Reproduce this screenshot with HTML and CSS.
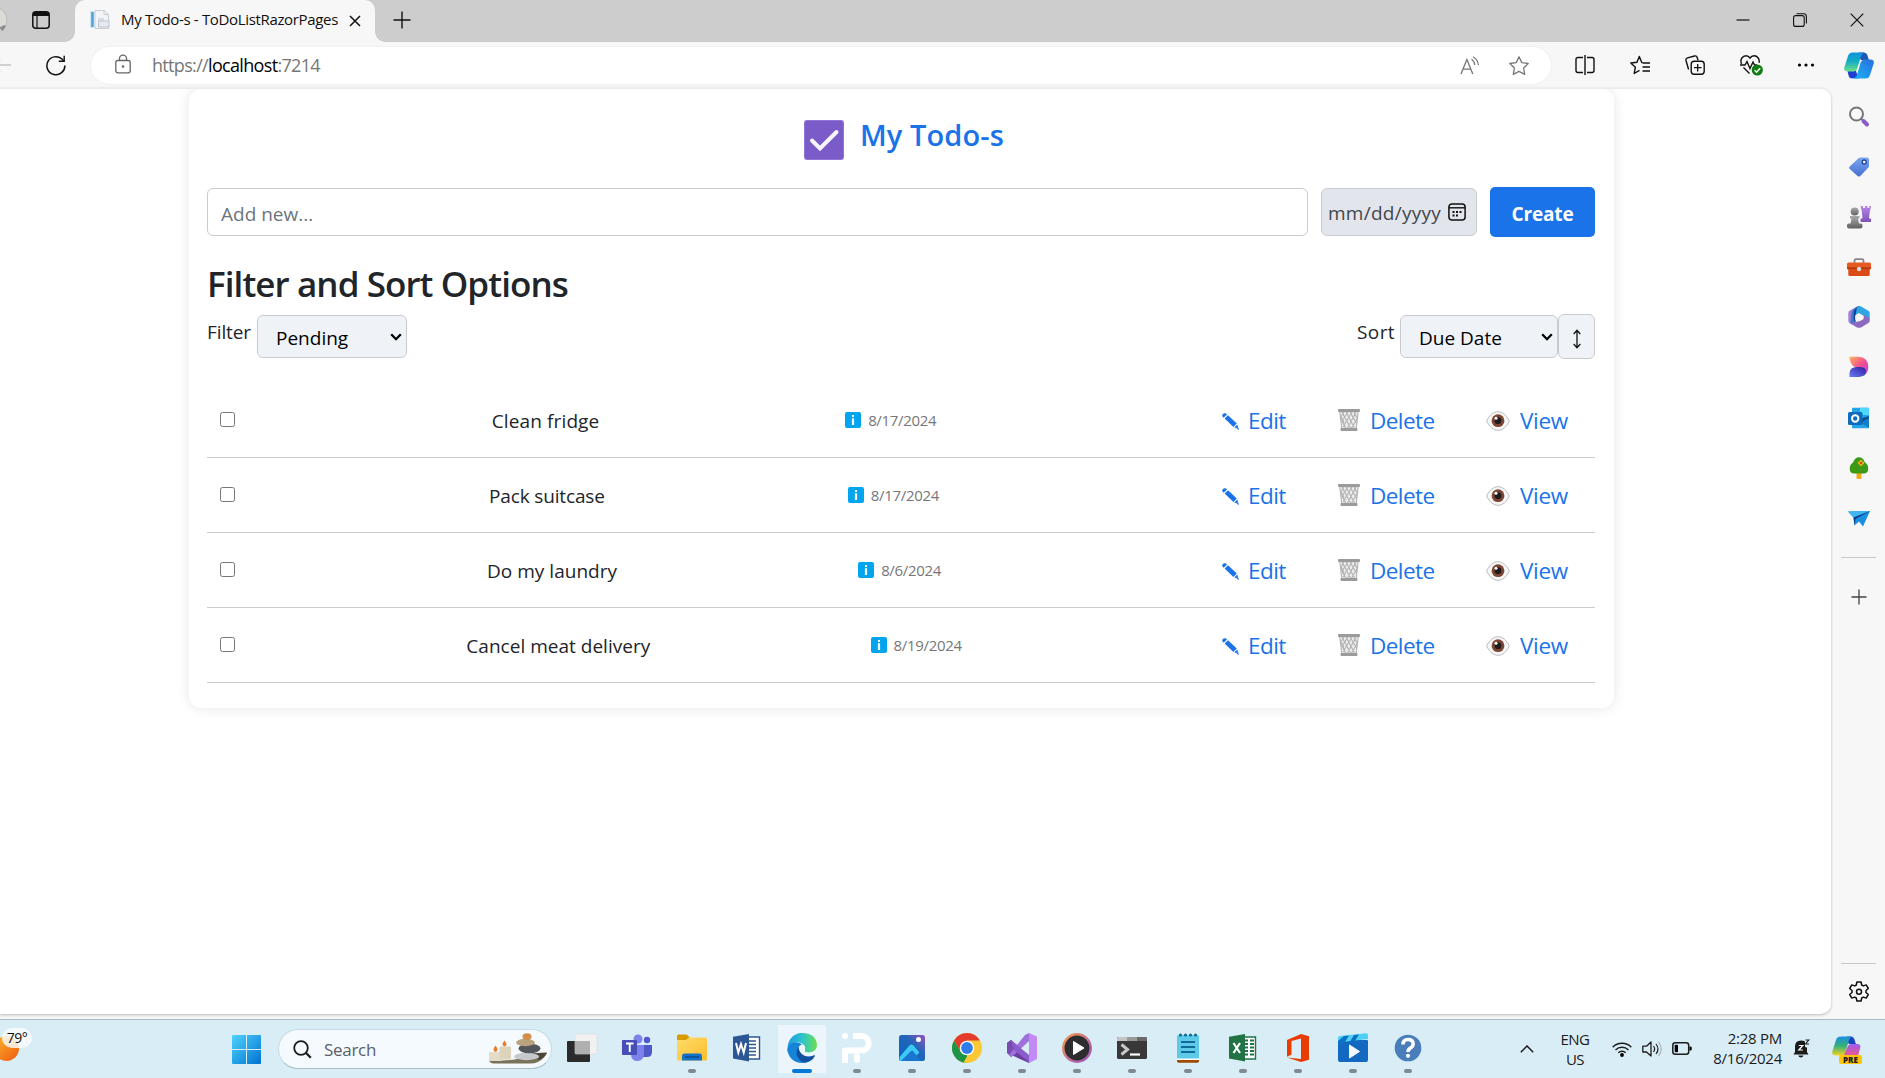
FILE: index.html
```html
<!DOCTYPE html>
<html lang="en">
<head>
<meta charset="utf-8">
<title>My Todo-s - ToDoListRazorPages</title>
<link rel="stylesheet" href="styles.css">
</head>
<body>
<svg class="defs" aria-hidden="true">
  <defs>
    <linearGradient id="g-blue" x1="0" y1="0" x2="1" y2="1"><stop offset="0" stop-color="#4fd3fb"/><stop offset="1" stop-color="#0072d2"/></linearGradient>
    <linearGradient id="g-purple" x1="0" y1="0" x2="0" y2="1"><stop offset="0" stop-color="#b987e6"/><stop offset="1" stop-color="#7c52ba"/></linearGradient>
    <linearGradient id="g-gray" x1="0" y1="0" x2="0" y2="1"><stop offset="0" stop-color="#aaa"/><stop offset="1" stop-color="#616161"/></linearGradient>
    <linearGradient id="g-tag" x1="0" y1="0" x2="0" y2="1"><stop offset="0" stop-color="#7ba8f0"/><stop offset="1" stop-color="#446fd0"/></linearGradient>
    <linearGradient id="g-cop1" x1="0" y1="0" x2="0" y2="1"><stop offset="0" stop-color="#0f94dc"/><stop offset=".45" stop-color="#12acc4"/><stop offset="1" stop-color="#6ee08a"/></linearGradient>
    <linearGradient id="g-cop2" x1="0" y1="1" x2="1" y2="0"><stop offset="0" stop-color="#19b4fa"/><stop offset="1" stop-color="#2a6edb"/></linearGradient>
    <linearGradient id="g-pre1" x1="0" y1="0" x2="0" y2="1"><stop offset="0" stop-color="#1b8fe0"/><stop offset=".5" stop-color="#35b07a"/><stop offset="1" stop-color="#f6d51f"/></linearGradient>
    <linearGradient id="g-pre2" x1="0" y1="0" x2="0" y2="1"><stop offset="0" stop-color="#9a5cf0"/><stop offset="1" stop-color="#f0578a"/></linearGradient>
    <linearGradient id="g-sun" x1="0" y1="0" x2="1" y2="1"><stop offset="0" stop-color="#ffb52e"/><stop offset="1" stop-color="#ee5a10"/></linearGradient>
    <linearGradient id="g-folder" x1="0" y1="0" x2="1" y2="1"><stop offset="0" stop-color="#ffdc6b"/><stop offset="1" stop-color="#fbbd2c"/></linearGradient>
    <linearGradient id="g-edge1" x1="0" y1="0" x2="1" y2="0"><stop offset="0" stop-color="#1f9be0"/><stop offset=".5" stop-color="#2cc3cf"/><stop offset="1" stop-color="#6be04e"/></linearGradient>
    <linearGradient id="g-photo" x1="0" y1="1" x2="1" y2="0"><stop offset="0" stop-color="#0b63c0"/><stop offset=".6" stop-color="#2166ba"/><stop offset="1" stop-color="#9a50b8"/></linearGradient>
    <linearGradient id="g-ring" x1="0" y1="0" x2="1" y2="1"><stop offset="0" stop-color="#f59a4a"/><stop offset="1" stop-color="#9a50c8"/></linearGradient>
    <linearGradient id="g-design" x1="0" y1="0" x2="1" y2="1"><stop offset="0" stop-color="#ffb35a"/><stop offset=".5" stop-color="#f4518f"/><stop offset="1" stop-color="#b43af0"/></linearGradient>
    <linearGradient id="g-design2" x1="0" y1="1" x2="1" y2="0"><stop offset="0" stop-color="#6d7cf8"/><stop offset="1" stop-color="#2c1f9c"/></linearGradient>

    <symbol id="i-pencil" viewBox="0 0 17 17"><path fill="#1a73e8" d="M2.600 5.600 6 2.200 14.800 10.600 11.400 14z"/><path fill="#1a73e8" d="M.5 3.600C0 2.500.2 1.600.9.900S2.900-.1 4 .5L5 1.400 1.700 4.700zM12.300 14.500 15.300 11.500 16 14 15 15.200zM14.600 15.700 16.200 14.200 17 17z"/></symbol>
    <symbol id="i-bin" viewBox="0 0 22 23">
      <path fill="#c9c9c9" fill-opacity=".35" d="M1.500 3h19l-2.300 17H3.800z"/>
      <path fill="none" stroke="#b3b3b3" stroke-width="1.100" d="M1.800 3l2 17M20.200 3l-2 17M6 3l-3 5 5 12M10 3 4 12l4 8M14 3 5 18M18 3 9 20M20 8l-7 12M16 3l3 6M12 3l7 12M8 3l9 17M4 3l9 17M3 8l3 5"/>
      <rect y="0" width="22" height="3" rx="1" fill="#9b9b9b"/><rect x="2.500" y="19" width="17" height="3" rx="1" fill="#9b9b9b"/></symbol>
    <symbol id="i-eye" viewBox="0 0 24 20"><path d="M.6 10C3.500 4 7.500.7 12 .7S20.500 4 23.400 10C20.500 16 16.500 19.300 12 19.300S3.500 16 .6 10z" fill="#f6f6f6" stroke="#b5b5b5" stroke-width=".9"/><circle cx="12" cy="9.700" r="6.400" fill="#7d4533"/><circle cx="12" cy="9.700" r="3.400" fill="#1c1c1c"/><circle cx="10" cy="7.300" r="1.500" fill="#fff"/></symbol>
    <symbol id="i-info" viewBox="0 0 16 16"><rect width="16" height="16" rx="2" fill="#00a4ef"/><path fill="#fff" d="M7 3h2v2H7zM6.900 6.200h2.200V13H6.900z"/></symbol>
    <symbol id="i-chev" viewBox="0 0 12 8"><path d="M1.200 1.300 6 6.200l4.800-4.900" fill="none" stroke="#000" stroke-width="2.300"/></symbol>
    <symbol id="i-star" viewBox="0 0 20 20"><path d="M10 .8l2.800 5.800 6.400.9-4.600 4.500 1.100 6.400-5.700-3-5.700 3 1.100-6.400L.8 7.500l6.400-.9z" fill="none" stroke-width="1.300" stroke-linejoin="round"/></symbol>
  </defs>
</svg>

<div class="screen">
  <header class="tabstrip">
    <div class="strip-left">
      <svg class="avatar" viewBox="0 0 8 28"><circle cx="-6" cy="14" r="13" fill="#dcdbd7" stroke="#bbb"/><path d="M-1 22q5-4 7-2l-3 5z" fill="#8d8d8d"/></svg>
      <svg class="tab-actions" viewBox="0 0 18 18"><rect x=".8" y=".8" width="16.400" height="16.400" rx="3" fill="none" stroke="#111" stroke-width="1.500"/><path d="M1 5V3q0-2 2-2h12q2 0 2 2v2z" fill="#111"/><path d="M5 5v12" stroke="#111" stroke-width="1.200"/></svg>
    </div>
    <div class="tab">
      <svg class="favicon" viewBox="0 0 20 20"><path d="M5 .5h9l4.500 4v14H5z" fill="#f3f4f6" stroke="#c9cdd3"/><path d="M14 .5v4h4.500" fill="none" stroke="#c9cdd3"/><path d="M0 1h4.500v17H0z" fill="#cfe5f3"/><path d="M1.200 2h2.500v15H1.200z" fill="#4fa3d1"/><path d="M8 8h6v4H8z" fill="#d9dde5"/><rect x="8.500" y="11" width="10.500" height="6" fill="#e6e9ef" stroke="#bcc3d0"/></svg>
      <span class="tab-title">My Todo-s - ToDoListRazorPages</span>
      <svg class="tab-close" viewBox="0 0 12 12"><path d="M1 1l10 10M11 1 1 11" stroke="#111" stroke-width="1.500"/></svg>
    </div>
    <svg class="new-tab" viewBox="0 0 18 18"><path d="M9 .5v17M.5 9h17" stroke="#111" stroke-width="1.400"/></svg>
    <div class="window-buttons">
      <svg viewBox="0 0 14 14"><path d="M.5 7h13" stroke="#111" stroke-width="1.200"/></svg>
      <svg viewBox="0 0 14 14"><rect x=".6" y="2.600" width="10.600" height="10.800" rx="2" fill="none" stroke="#111" stroke-width="1.100"/><path d="M3.500 .7h7q2.900 0 2.900 2.900v7" fill="none" stroke="#111" stroke-width="1.100"/></svg>
      <svg viewBox="0 0 14 14"><path d="M.7.7l12.600 12.600M13.300.7.7 13.300" stroke="#111" stroke-width="1.200"/></svg>
    </div>
  </header>

  <div class="toolbar">
    <svg class="back" viewBox="0 0 11 20"><path d="M0 10h11M0 4.500 0 4M0 16v.5" stroke="#c4c4c4" stroke-width="1.400"/></svg>
    <svg class="reload" viewBox="0 0 20 21"><path d="M18.900 10.500a9 9 0 1 1-3.200-6.700l2 2" fill="none" stroke="#111" stroke-width="1.500"/><path d="M18.200.8v5.400h-5.400" fill="none" stroke="#111" stroke-width="1.400"/></svg>
    <div class="address">
      <svg class="lock" viewBox="0 0 16 20"><rect x=".8" y="6.500" width="14.400" height="12.300" rx="2" fill="none" stroke="#666" stroke-width="1.300"/><path d="M4.500 6.500V4.600a3.500 3.500 0 0 1 7 0v1.900" fill="none" stroke="#666" stroke-width="1.300"/><circle cx="8" cy="12.500" r="1.300" fill="#666"/></svg>
      <span class="url">https://<b>localhost</b>:7214</span>
      <svg class="read" viewBox="0 0 20 19"><path d="M1 18 6.900 3.500 12.800 18M3 13.200h7.800" fill="none" stroke="#777" stroke-width="1.300"/><path d="M11.500 3.200q3 2 3.300 5.800M13 .8q4.800 2.700 5.500 8.500" fill="none" stroke="#777" stroke-width="1.200"/></svg>
      <svg class="fav" viewBox="0 0 20 20" stroke="#777"><use href="#i-star"/></svg>
    </div>
    <div class="tools">
      <svg viewBox="0 0 20 20"><path d="M8 2.500H3q-2 0-2 2v11q0 2 2 2h5M12 2.500h5q2 0 2 2v11q0 2-2 2h-5M10 0v20" fill="none" stroke="#111" stroke-width="1.400"/></svg>
      <svg viewBox="0 0 20 20"><path d="M12 8 9.300 1.500 7 7.200.8 8l4.600 4.200L4.200 18.500 9.500 15.400M12.500 8H20M12.500 12H20M12.500 16H20" fill="none" stroke="#111" stroke-width="1.400" stroke-linejoin="round"/></svg>
      <svg viewBox="0 0 20 20"><path d="M3.600 14.500 1 5.500q-.5-2 1.500-2.600L9.600 1q2-.5 2.600 1.500l.8 2.800" fill="none" stroke="#111" stroke-width="1.400"/><rect x="6.200" y="6.200" width="13" height="13" rx="3" fill="#f7f7f7" stroke="#111" stroke-width="1.400"/><path d="M12.700 9v7.500M9 12.700h7.500" stroke="#111" stroke-width="1.300"/></svg>
      <svg class="heart" viewBox="0 0 23 21"><path d="M1.500 9C-.5 4 3 .8 6 .8q2.500 0 4 2.200Q11.500.8 14 .8c3.500 0 6 3.500 5 7M0 10h5l2-3.500 3 7L13 7l1.500 3H17M3.500 12.500l6 6" fill="none" stroke="#111" stroke-width="1.400"/><circle cx="17.300" cy="15" r="5.600" fill="#107c10"/><path d="M14.600 15.200l2 2 3.600-4" fill="none" stroke="#fff" stroke-width="1.500"/></svg>
      <svg class="more" viewBox="0 0 20 20"><circle cx="3.500" cy="10" r="1.600"/><circle cx="10" cy="10" r="1.600"/><circle cx="16.500" cy="10" r="1.600"/></svg>
      <svg class="copilot" viewBox="0 0 30 27"><path d="M15 .5h5q2.500 0 3.300 2.500l1.600 5h-8l-3-5z" fill="#1b58b8"/><path d="M6.500 26.300q-1.500-.5-2-3L3.500 19H12l2.500 7.500z" fill="#1e3fd0"/><path d="M8.500.5H20q-2 .5-3 3.500L13.500 16q-1 3.500-4 3.500H3.500Q-.5 19.500.3 15.500L4 4Q5 .5 8.500.5z" fill="url(#g-cop1)"/><path d="M21 7.500h5.500Q30.500 7.500 29.700 11.500L26 23q-1 3.500-4.500 3.500H9q3-.5 4-3.500L16.500 11q1-3.500 4.500-3.500z" fill="url(#g-cop2)"/></svg>
    </div>
  </div>

  <div class="window">
    <div class="viewport">
      <main class="card">
        <div class="brand">
          <svg class="brand-icon" viewBox="0 0 40 40"><rect width="40" height="40" rx="3" fill="#8f75d8"/><rect x="1" y="1" width="38" height="38" rx="2.500" fill="#7a5bc8"/><path d="M8 20.500 16 28.500 32.500 12" fill="none" stroke="#f7f5fc" stroke-width="4" stroke-linecap="round"/></svg>
          <h1>My Todo-s</h1>
        </div>
        <form class="create">
          <input class="new-item" type="text" placeholder="Add new...">
          <div class="date-field"><span>mm/dd/yyyy</span>
            <svg viewBox="0 0 18 18"><rect x=".9" y=".9" width="16.200" height="16.200" rx="3" fill="none" stroke="#111" stroke-width="1.500"/><path d="M1 4.800h16" stroke="#111" stroke-width="1.400"/><path d="M4.500 8h2v2h-2zM8 8h2v2H8zM11.500 8h2v2h-2zM4.500 11.500h2v2h-2zM8 11.500h2v2H8z" fill="#111"/></svg>
          </div>
          <button class="submit" type="button">Create</button>
        </form>
        <h2>Filter and Sort Options</h2>
        <div class="options">
          <div class="option"><span class="label">Filter</span><div class="select pending"><span>Pending</span><svg><use href="#i-chev"/></svg></div></div>
          <div class="option"><span class="label sort">Sort</span><div class="select due"><span>Due Date</span><svg><use href="#i-chev"/></svg></div>
            <button class="direction" type="button" aria-label="Direction"><svg viewBox="0 0 10 20"><path d="M5 1.500v17M1.700 5 5 1.300 8.300 5M1.700 15 5 18.700 8.300 15" fill="none" stroke="#111" stroke-width="1.300"/></svg></button></div>
        </div>
        <ul class="todos">
          <li><input type="checkbox"><span class="title t1">Clean fridge</span><span class="due-on"><svg><use href="#i-info"/></svg>8/17/2024</span>
            <div class="actions"><a class="edit"><svg><use href="#i-pencil"/></svg>Edit</a><a class="delete"><svg><use href="#i-bin"/></svg>Delete</a><a class="view"><svg><use href="#i-eye"/></svg>View</a></div></li>
          <li><input type="checkbox"><span class="title t2">Pack suitcase</span><span class="due-on"><svg><use href="#i-info"/></svg>8/17/2024</span>
            <div class="actions"><a class="edit"><svg><use href="#i-pencil"/></svg>Edit</a><a class="delete"><svg><use href="#i-bin"/></svg>Delete</a><a class="view"><svg><use href="#i-eye"/></svg>View</a></div></li>
          <li><input type="checkbox"><span class="title">Do my laundry</span><span class="due-on"><svg><use href="#i-info"/></svg>8/6/2024</span>
            <div class="actions"><a class="edit"><svg><use href="#i-pencil"/></svg>Edit</a><a class="delete"><svg><use href="#i-bin"/></svg>Delete</a><a class="view"><svg><use href="#i-eye"/></svg>View</a></div></li>
          <li><input type="checkbox"><span class="title">Cancel meat delivery</span><span class="due-on"><svg><use href="#i-info"/></svg>8/19/2024</span>
            <div class="actions"><a class="edit"><svg><use href="#i-pencil"/></svg>Edit</a><a class="delete"><svg><use href="#i-bin"/></svg>Delete</a><a class="view"><svg><use href="#i-eye"/></svg>View</a></div></li>
        </ul>
      </main>
    </div>
    <aside class="sidebar">
      <div class="apps">
        <svg viewBox="0 0 22 22"><circle cx="8.500" cy="8" r="6.500" fill="#f9f9f9" stroke="#777" stroke-width="2"/><path d="M13 12.500l2.500 2.500" stroke="#777" stroke-width="2"/><path d="M15.500 15l3.500 3.500" stroke="#8a5cc8" stroke-width="4" stroke-linecap="round"/></svg>
        <svg viewBox="0 0 22 22"><path d="M12.500 1.500H19q2 0 2 2V10q0 1-.8 1.800l-8 8.200q-1.300 1.200-2.600 0L1.700 13q-1.200-1.200 0-2.500l8.500-8q1-1 2.300-1z" fill="url(#g-tag)"/><circle cx="16.200" cy="6" r="2" fill="#fff" stroke="#1d47a0" stroke-width="1.300"/></svg>
        <svg class="wide" viewBox="0 0 24 24"><path d="M13.500 1h2.500v2h2V1h2.500v2h1.800V1h2L22.800 6.500 22 13l2 1v3H13.500v-3l2-1-.7-6.500z" fill="url(#g-purple)"/><circle cx="7.700" cy="6.500" r="4" fill="url(#g-gray)"/><path d="M3 11h9.500v2.400H11l1 5h2q1.500 0 1.500 2v1q0 2-2 2H2q-2 0-2-2v-1q0-2 1.500-2h2l1-5H3z" fill="url(#g-gray)"/></svg>
        <svg class="wide" viewBox="0 0 24 24"><path d="M7.500 8V5.500Q7.500 4.200 9 4.200h6q1.500 0 1.500 1.300V8" fill="none" stroke="#888" stroke-width="1.800"/><rect x="1.300" y="10" width="21.400" height="11" rx="1.500" fill="#da4b16"/><rect y="7.500" width="24" height="7" rx="1.500" fill="#e55b22"/><path d="M0 12.300h24V13q0 1.300-1.500 1.300h-21Q0 14.300 0 13z" fill="#b83a0c"/><circle cx="12" cy="14" r="2.200" fill="#ddd"/></svg>
        <svg viewBox="0 0 22 22"><path d="M9.500.3 8 7v9l-4.300 2.400-2.200-1.300Q.3 16.300.3 14.800V7q0-1.500 1.300-2.300z" fill="#a280d5"/><path d="M8.500.9Q11-.6 13.500.9l-3 5.600L7 9v8l-4.500.5Q3 12 3.500 7 4.500 3 8.500.9z" fill="#3b78d2"/><path d="M9 .7q2-1.200 4.500.1l6.800 3.900Q21.700 5.600 21.700 7v6.500L11 7.200 7.500 9z" fill="#30a5e4"/><path d="M9 .7 7.500 9 7 16.500 5.500 12 6 5z" fill="#153f91"/><path d="M21.700 12.500v2.300q0 1.500-1.300 2.300l-7 4.100q-2.400 1.300-4.800 0l-5.800-3.500L11 15l4.500-2 .5-4z" fill="#8f68bf"/><path d="M11 7.200l3.800 2.200v4L11 15.600l-3.800-2.200v-4z" fill="#f7f7f7"/></svg>
        <svg viewBox="0 0 22 22"><path d="M1.500.8h9Q20 1 20.300 11q0 6-5 9l-3-8Q2 12 1.500.8z" fill="url(#g-design)"/><path d="M1.500 21V17q.5-6 7-6h3q6.500 0 6.500 4.500T11 21z" fill="url(#g-design2)"/></svg>
        <svg viewBox="0 0 22 22"><path d="M4 1.500Q4 .7 5 .7h15q1 0 1 1v18.500q0 1-1 1H4z" fill="#25a5e8"/><path d="M12 .7h8q1 0 1 1V8h-9z" fill="#50d9ff"/><path d="M21 9l-9 6.500 9 5.500z" fill="#1280c8"/><path d="M21 9v2l-9 5-4-3z" fill="#0a4f92"/><rect y="5" width="14.500" height="13" rx="1.500" fill="#0f6cbd"/><circle cx="7.200" cy="11.500" r="3.200" fill="none" stroke="#fff" stroke-width="2"/></svg>
        <svg viewBox="0 0 22 22"><path d="M8.500 15h5v6q0 1-1 1h-3q-1 0-1-1z" fill="#f2a91d"/><path d="M11 .3q4 0 5.800 5 3.400 2 3.400 6.200 0 5-4.500 5h-9.500q-4.500 0-4.500-5Q1.700 7.500 5 5.500 7 .3 11 .3z" fill="#3d9a16"/><path d="M13 3.200v5.600M10.200 6h5.600" stroke="#f8c21a" stroke-width="2.400"/><circle cx="13" cy="6" r="1.300" fill="#d8421a"/></svg>
        <svg viewBox="0 0 22 22"><path d="M0 4.500 22 4 15 19.500 11 14.500 6.500 18.500 5.500 10.500z" fill="#1a8fe0"/><path d="M0 4.500 22 4 5.500 10.500z" fill="#41b7f2"/><path d="M22 4 7.500 12 6.500 18.500 5.500 10.500z" fill="#0b3f86"/></svg>
      </div>
      <div class="rule"></div>
      <svg class="add" viewBox="0 0 16 16"><path d="M8 .5v15M.5 8h15" stroke="#444" stroke-width="1.300"/></svg>
      <div class="rule bottom"></div>
      <svg class="gear" viewBox="0 0 22 22"><path d="M8.900 1h4.200l.6 3 1.600.9 2.900-1 2.100 3.600-2.300 2v2l2.300 2-2.100 3.600-2.900-1-1.600.9-.6 3H8.900l-.6-3-1.600-.9-2.900 1-2.100-3.600 2.300-2v-2l-2.300-2 2.100-3.600 2.900 1L8.300 4z" fill="none" stroke="#111" stroke-width="1.500" stroke-linejoin="round"/><circle cx="11" cy="10.800" r="2.500" fill="none" stroke="#111" stroke-width="1.500"/></svg>
    </aside>
  </div>

  <footer class="taskbar">
    <div class="weather">
      <svg viewBox="0 0 20 28"><circle cx="6.500" cy="13.500" r="12.500" fill="url(#g-sun)"/></svg>
      <span>79°</span>
    </div>
    <svg class="start" viewBox="0 0 29 29"><path d="M0 1q0-1 1-1h13v14H0zM15 0h13q1 0 1 1v13H15zM0 15h14v14H1q-1 0-1-1zM15 15h14v13q0 1-1 1H15z" fill="url(#g-blue)"/></svg>
    <div class="search">
      <svg class="glass" viewBox="0 0 19 19"><circle cx="8" cy="8" r="6.800" fill="none" stroke="#1b1b1b" stroke-width="1.800"/><path d="M12.800 12.800l5 5" stroke="#1b1b1b" stroke-width="2.300"/></svg>
      <span>Search</span>
      <svg class="zen" viewBox="0 0 58 32"><path d="M0 27q30 2 38-5l20-2q-3 6-9 9-3 1.500-8 1.500H5Q1 30.500 0 27z" fill="#7a735c"/><path d="M38 20.500l20-1q-3 6-8 7.500z" fill="#4b4637"/><rect y="19" width="13" height="9" rx="1" fill="#e4dcc8"/><rect x="10.500" y="13.500" width="11.500" height="13" rx="1" fill="#ddd3ba"/><path d="M6.500 12.500q4 5 0 6.500-4-1.500 0-6.500zM15.500 7.500q4 5 0 6-4-1.500 0-6z" fill="#ec7c2c"/><ellipse cx="37.500" cy="23.500" rx="12.500" ry="3.700" fill="#c6c8cb"/><ellipse cx="40.500" cy="15.500" rx="11" ry="4.800" fill="#53565b"/><ellipse cx="36.500" cy="9.500" rx="9.500" ry="3.700" fill="#b9a37e"/><ellipse cx="38" cy="3.600" rx="4.500" ry="3.400" fill="#d18f4a"/></svg>
    </div>
    <nav class="pinned">
      <div class="app"><svg viewBox="0 0 30 30"><rect y="8" width="23" height="21" rx="1" fill="#2b2b2b"/><rect x="8" y="1" width="22" height="20" rx="1" fill="#f1f1f1" stroke="#dcdcdc" stroke-width=".6"/><path d="M8 8h15v13H8z" fill="#b0b0b0"/></svg></div>
      <div class="app"><svg viewBox="0 0 30 30"><circle cx="16" cy="6" r="4.500" fill="#7b83eb"/><circle cx="25" cy="7" r="3.200" fill="#5059c9"/><path d="M20 12h10v7q0 5-5 5h-4z" fill="#5059c9"/><path d="M9 12h13v9q-.5 7-6.500 7T9 22z" fill="#7b83eb"/><rect y="7" width="15" height="15" rx="1" fill="#464eb8"/><path d="M4 10.500h7.500M7.750 10.500v8.500" stroke="#fff" stroke-width="1.900"/></svg></div>
      <div class="app run"><svg viewBox="0 0 30 30"><path d="M0 3q0-1.500 1.500-1.500H9q1 0 2 1.200L13 5 9 9H0z" fill="#d99a00"/><path d="M0 7h9l3-2.500h16.500q1.500 0 1.500 1.500V26q0 1.500-1.500 1.500h-27Q0 27.500 0 26z" fill="url(#g-folder)"/><path d="M5 27.500V23q0-2.500 2.500-2.500h15Q25 20.500 25 23v4.500z" fill="#1473c8"/><path d="M8 24h14" stroke="#0a4b8c" stroke-width="1.500"/></svg></div>
      <div class="app"><svg viewBox="0 0 30 30"><path d="M15 4h12.500v22H15z" fill="#fff" stroke="#2b5797" stroke-width="1.400"/><path d="M16 8h8M16 11.500h8M16 15h8M16 18.500h8M16 22h8" stroke="#2b5797" stroke-width="1.600"/><path d="M1 3.800 17 1v27.500L1 25.500z" fill="#2b5797"/><path d="M4 10l2.300 9.500L9 11l2.700 8.500L14 10" fill="none" stroke="#fff" stroke-width="2"/></svg></div>
      <div class="app active"><svg viewBox="0 0 30 30"><path d="M1 19C-1 8 6 0 15 0q14 0 15 12 0 7-8 7.500-5 0-4-2.500 1-3-1-5-4-4-9-2Q2 12 1 19z" fill="url(#g-edge1)"/><path d="M.2 17Q2 8.500 10 9.500q3 0 5 2-4 1-4 6 1 9 11.500 8.500l5-1.500Q22.500 30 15 30 3 29.500.2 17z" fill="#1583d8"/><path d="M12 13.500Q7 20 12 26q3 3.500 6.500 3.500 6-1.500 9.500-6.500 0-1-1-.7-7 3-12-1-4-4-3-7.800z" fill="#10509c"/></svg></div>
      <div class="app run"><svg viewBox="0 0 30 30"><circle cx="3" cy="3" r="3" fill="#fff"/><path d="M11 3h8.500a7.200 7.200 0 0 1 0 14.500H3V30" fill="none" stroke="#fff" stroke-width="6" stroke-linejoin="round"/><path d="M15 23.500V27" stroke="#fff" stroke-width="6" stroke-linecap="round"/></svg></div>
      <div class="app run"><svg viewBox="0 0 30 30"><rect x="2" y="2" width="26" height="26" rx="2.500" fill="url(#g-photo)"/><circle cx="21.500" cy="6.500" r="2.500" fill="#fff"/><path d="M2.500 24 12.500 12.500q2-2 4 0l6 7-9 8.500H4q-1.500 0-1.500-1.500z" fill="#3ccaf5"/><path d="M14 18l-10 10h20l-8-10q-1-1-2 0z" fill="#1976cf"/></svg></div>
      <div class="app run"><svg viewBox="0 0 30 30"><circle cx="15" cy="15" r="15" fill="#fcc934"/><path d="M2 7.500A15 15 0 0 1 28 7.500H15L8.500 19z" fill="#e33b2e"/><path d="M2 7.500 8.500 18.700l7 3.800L15 30A15 15 0 0 1 2 7.500z" fill="#1e9446"/><path d="M15 30l6.500-11-6 3.500-4 7z" fill="#fcc934"/><circle cx="15" cy="15" r="7.300" fill="#fff"/><circle cx="15" cy="15" r="5.900" fill="#2f7de9"/></svg></div>
      <div class="app run"><svg viewBox="0 0 30 30"><path d="M0 10l4-3 18 16v7L2 21l-2-2z" fill="#6b3fa0"/><path d="M0 10l4-3 3 3v12l-3 2-4-4z" fill="#7a4cb0"/><path d="M22 0v8L7 22l-3 2-2-2L18 2z" fill="#a070dc"/><path d="M4 7l18 15v7L7 17z" fill="#8a5ccc"/><path d="M22 0l8 3.500V26l-8 4z" fill="#c18af5"/></svg></div>
      <div class="app run"><svg viewBox="0 0 30 30"><circle cx="15" cy="15" r="13.700" fill="#2d2d30" stroke="url(#g-ring)" stroke-width="2.500"/><path d="M11.500 8.500 22 15l-10.500 6.500z" fill="#fff" stroke="#fff" stroke-linejoin="round"/></svg></div>
      <div class="app run"><svg viewBox="0 0 30 30"><rect y="4" width="30" height="22" rx="1.500" fill="#383838"/><path d="M0 8V5.500Q0 4 1.500 4H10v4z" fill="#c5c5c5"/><path d="M10 4h10v4H10z" fill="#9a9a9a"/><path d="M20 4h8.500Q30 4 30 5.500V8H20z" fill="#6a6a6a"/><path d="M4.500 11.500l6 5-6 5" fill="none" stroke="#c8c8c8" stroke-width="3"/><path d="M13 21.500h10" stroke="#fff" stroke-width="2.200"/></svg></div>
      <div class="app run"><svg viewBox="0 0 30 30"><rect x="4" y="2" width="22" height="25" rx="1.500" fill="#5fc9e8"/><path d="M4 27h22v1q0 1.700-1.500 1.700h-19Q4 29.700 4 28z" fill="#a04a00"/><path d="M4 25.500h22V27H4z" fill="#fff"/><path d="M8 9h14M8 14h14M8 19h14" stroke="#0f6b95" stroke-width="1.900"/><g fill="#0f6b95"><circle cx="7.500" cy="2" r="1.600"/><circle cx="12.500" cy="2" r="1.600"/><circle cx="17.500" cy="2" r="1.600"/><circle cx="22.500" cy="2" r="1.600"/></g></svg></div>
      <div class="app run"><svg viewBox="0 0 30 30"><path d="M15 4h12.500v22H15z" fill="#fff" stroke="#217346" stroke-width="1.400"/><path d="M17 7.500h3M17 11h3M17 14.500h3M17 18h3M17 21.500h3M22 7.500h4M22 11h4M22 14.500h4M22 18h4M22 21.500h4" stroke="#217346" stroke-width="2.200"/><path d="M1 3.800 17 1v27.500L1 25.500z" fill="#217346"/><path d="M5.500 10l6.500 10M12 10 5.500 20" stroke="#fff" stroke-width="2.200"/></svg></div>
      <div class="app run"><svg viewBox="0 0 30 30"><path d="M4 7 18 1l8 2.300v23.400L18 29 4 24.500l14 1.500V5.500L8.500 8v13.500L4 23.800z" fill="#eb3c00"/></svg></div>
      <div class="app run"><svg viewBox="0 0 30 30"><path d="M0 8q0-1 1-1h28q1 0 1 1v19q0 2-2 2H2q-2 0-2-2z" fill="#1369c0"/><path d="M0 5q0-1.500 1.500-2L28 .3q2 0 2 1.500V6L0 9.500z" fill="#4fd0f7"/><path d="M6 3l5-.5L7 9l-7 3V8zM16 2l5-.6L17 8l-5 .6z" fill="#0d72c4"/><path d="M11.500 12v13l10-6.500z" fill="#f4f9ff" stroke="#f4f9ff" stroke-linejoin="round"/></svg></div>
      <div class="app run"><svg viewBox="0 0 30 30"><circle cx="15" cy="15" r="13.300" fill="#4a7ebb"/><path d="M10 11.500Q10 6.500 15 6.500t5.200 4.300q0 2.500-2.700 4.200-2.500 1.500-2.500 4" fill="none" stroke="#fff" stroke-width="3.500"/><circle cx="15" cy="22.800" r="2.100" fill="#fff"/></svg></div>
    </nav>
    <div class="tray">
      <svg class="up" viewBox="0 0 14 8"><path d="M.8 7.200 7 1l6.200 6.200" fill="none" stroke="#1b1b1b" stroke-width="1.500"/></svg>
      <div class="lang"><span>ENG</span><span>US</span></div>
      <svg class="wifi" viewBox="0 0 20 16"><g fill="none" stroke="#1b1b1b" stroke-width="1.400"><path d="M.7 6.200a13 13 0 0 1 18.600 0M3.500 9a9.200 9.200 0 0 1 13 0M6.300 11.700a5.300 5.300 0 0 1 7.400 0"/></g><circle cx="10" cy="14" r="1.900"/></svg>
      <svg class="volume" viewBox="0 0 20 16"><path d="M.8 5.200h3.700L9 1v14l-4.500-4H.8z" fill="none" stroke="#1b1b1b" stroke-width="1.300" stroke-linejoin="round"/><path d="M11.500 5q2.300 3 0 6M14 3q4 5 0 10" fill="none" stroke="#1b1b1b" stroke-width="1.200"/><path d="M16.500.8q5.500 7.200 0 14.400" fill="none" stroke="#aab4ba" stroke-width="1.200"/></svg>
      <svg class="battery" viewBox="0 0 20 13"><rect x=".8" y=".8" width="15.900" height="11.400" rx="2.500" fill="none" stroke="#1b1b1b" stroke-width="1.500"/><rect x="2.700" y="2.800" width="3.300" height="7.400" rx=".8"/><path d="M17.500 4.500h1q1.200 0 1.200 1.200v1.600q0 1.200-1.200 1.200h-1z"/></svg>
      <div class="clock"><span>2:28 PM</span><span>8/16/2024</span></div>
      <svg class="bell" viewBox="0 0 17 19"><path d="M2 13V7.500Q2 1.500 8 1.500q2.500 0 4 1V8l2 .5V13l1.500 2.500H.5z" fill="#1b1b1b"/><path d="M5.300 16.500h5.200q-.5 2-2.600 2t-2.600-2z" fill="#1b1b1b"/><path d="M5.800 6.500h4l-4 4.500h4" fill="none" stroke="#fff" stroke-width="1.200"/><path d="M12.500 1h3.300l-3.300 4h3.500" fill="none" stroke="#1b1b1b" stroke-width="1.100"/></svg>
      <div class="preview">
        <svg viewBox="0 0 30 28"><path d="M15 .5h4q2.500 0 3.300 2.500l1.600 5h-7l-3-5z" fill="#1a45c0"/><path d="M8.500.5H20q-2 .5-3 3.500L13.500 16q-1 3.500-4 3.500H3.500Q-.5 19.500.3 15.500L4 4Q5 .5 8.500.5z" fill="url(#g-pre1)"/><path d="M20 8h5.500q3.500 0 2.700 4L26 20H11.500L15.500 11q1-3 4.500-3z" fill="url(#g-pre2)"/></svg>
        <span>PRE</span>
      </div>
    </div>
  </footer>
</div>
</body>
</html>
```
FILE: styles.css
```css
* { box-sizing: border-box; }
body {
  margin: 0;
  font-family: "Open Sans", "Noto Sans", sans-serif;
  color: #212529;
  background: #f7f7f7;
}
svg { display: block; flex: none; }
h1, h2, ul { margin: 0; padding: 0; }
button, input { font-family: inherit; }
.defs { position: absolute; width: 0; height: 0; }
.screen {
  display: flex;
  flex-direction: column;
  width: 1885px;
  height: 1078px;
  overflow: hidden;
}

/* Tab strip */
.tabstrip { display: flex; height: 42px; background: #cdcdcd; }
.strip-left { display: flex; align-items: flex-start; width: 75px; }
.avatar { width: 8px; height: 28px; margin-top: 6px; }
.tab-actions { width: 18px; height: 18px; margin: 11px 0 0 24px; }
.tab {
  position: relative;
  display: flex;
  align-items: center;
  width: 300px;
  padding: 0 14px 3px 15px;
  border-radius: 10px 10px 0 0;
  background: #f7f7f7;
}
/* Flared feet where the tab meets the toolbar */
.tab::before, .tab::after {
  content: "";
  position: absolute;
  bottom: 0;
  width: 10px;
  height: 10px;
}
.tab::before { right: 100%; background: radial-gradient(circle at 0 0, transparent 9.5px, #f7f7f7 10px); }
.tab::after { left: 100%; background: radial-gradient(circle at 100% 0, transparent 9.5px, #f7f7f7 10px); }
.favicon { width: 20px; height: 20px; }
.tab-title {
  width: 228px;
  margin: -1px 0 0 11px;
  font-size: 15px;
  letter-spacing: -0.34px;
  color: #111;
  white-space: nowrap;
}
.tab-close { width: 12px; height: 12px; margin-top: 3px; }
.new-tab { width: 18px; height: 18px; margin: 11px 0 0 18px; }
.window-buttons { display: flex; gap: 43px; margin: 13px 21px 0 auto; }
.window-buttons svg { width: 14px; height: 14px; }

/* Toolbar */
.toolbar {
  display: flex;
  align-items: center;
  height: 46px;
  background: #f7f7f7;
}
.back { width: 11px; height: 20px; }
.reload { width: 20px; height: 21px; margin-left: 35px; }
.address {
  display: flex;
  align-items: center;
  width: 1460px;
  height: 37px;
  margin-left: 25px;
  padding: 0 22px 0 24px;
  border-radius: 19px;
  background: #fff;
  box-shadow: 0 0 3px rgba(0, 0, 0, .06);
}
.lock { width: 16px; height: 20px; margin-top: -3px; }
.url {
  flex: 1;
  margin-left: 21px;
  font-size: 18px;
  letter-spacing: -0.67px;
  color: #767676;
}
.url b { font-weight: 400; color: #000; }
.read { width: 20px; height: 19px; margin-right: 29px; }
.fav { width: 20px; height: 20px; margin-top: 1px; }
.tools { display: flex; align-items: center; gap: 35px; margin-left: 24px; }
.tools svg { width: 20px; height: 20px; }
.tools .heart { width: 23px; height: 21px; }
.tools .more { margin-left: -2px; }
.tools .copilot { width: 30px; height: 27px; margin-left: -7px; }

/* Browser window body */
.window { display: flex; height: 931px; }
.viewport {
  width: 1831px;
  height: 926px;
  padding-left: 189px;
  border-top: 1px solid #ebebeb;
  border-radius: 0 10px 10px 0;
  background: #fff;
  box-shadow: 0 1px 3px rgba(0, 0, 0, .25);
}
.card {
  width: 1425px;
  height: 619px;
  padding: 0 19px 0 18px;
  border-radius: 12px;
  background: #fff;
  box-shadow: 0 0 13px rgba(0, 0, 0, .1);
  clip-path: inset(0 -20px -20px);
}
.brand {
  display: flex;
  justify-content: center;
  height: 98px;
  padding: 31px 0 0 5px;
}
.brand-icon { width: 40px; height: 40px; }
h1 {
  margin: -5px -1px 0 16px;
  font-size: 29px;
  font-weight: 580;
  line-height: 40px;
  letter-spacing: .1px;
  color: #1a73e8;
}
.create { display: flex; align-items: center; gap: 13px; height: 50px; }
.new-item {
  width: 1101px;
  height: 48px;
  padding: 4px 13px 0;
  border: 1px solid #c9cbce;
  border-radius: 6px;
  font-size: 19px;
}
.new-item::placeholder { color: #6c757d; opacity: 1; }
.date-field {
  display: flex;
  align-items: center;
  width: 156px;
  height: 48px;
  padding: 2px 10px 0 6px;
  border: 1px solid #c9ccd0;
  border-radius: 6px;
  background: #e2e6ec;
  font-size: 19px;
  letter-spacing: .26px;
  color: #42474c;
}
.date-field svg { width: 18px; height: 18px; margin: -3px 0 0 auto; }
.submit {
  width: 105px;
  height: 50px;
  padding: 3px 0 0;
  border: 0;
  border-radius: 5px;
  background: #1a73e8;
  color: #fff;
  font-size: 19px;
  font-weight: 700;
  letter-spacing: -0.15px;
}
h2 {
  margin-top: 25px;
  font-size: 35px;
  font-weight: 560;
  line-height: 44px;
  letter-spacing: -0.92px;
  white-space: nowrap;
}
.options {
  display: flex;
  justify-content: space-between;
  height: 45px;
  margin-top: 8px;
}
.option { display: flex; align-items: flex-start; font-size: 19px; }
.label { width: 50px; padding-top: 4px; line-height: 28px; letter-spacing: -0.1px; }
.label.sort { width: 43px; letter-spacing: .4px; }
.select {
  display: flex;
  align-items: center;
  justify-content: space-between;
  width: 150px;
  height: 43px;
  margin-top: 1px;
  padding: 2px 4px 0 18px;
  border: 1px solid #c9cbce;
  border-radius: 6px;
  background: #eff3f8;
  color: #000;
}
.select.due { width: 158px; }
.select svg { width: 12px; height: 8px; margin-top: -2px; }
.direction {
  display: flex;
  align-items: center;
  justify-content: center;
  width: 37px;
  height: 45px;
  padding: 4px 0 0;
  border: 1px solid #c9cbce;
  border-radius: 6px;
  background: #eff3f8;
}
.direction svg { width: 10px; height: 20px; }

/* Todo list */
.todos { margin-top: 24px; list-style: none; }
.todos li {
  display: flex;
  align-items: center;
  justify-content: space-between;
  height: 75px;
  border-bottom: 1px solid #ccc;
}
.todos input { width: 15px; height: 15px; margin: 0 11px 2px 13px; }
.title { margin-top: 2px; font-size: 19px; letter-spacing: .02px; }
.t1 { letter-spacing: .12px; }
.t2 { letter-spacing: -0.15px; }
.due-on {
  display: flex;
  align-items: center;
  margin-top: -1px;
  font-size: 15px;
  letter-spacing: -0.33px;
  color: #777;
}
.due-on svg { width: 16px; height: 16px; margin-right: 7px; }
.actions {
  display: grid;
  grid-template-columns: 116px 148px 1fr;
  width: 413px;
  padding: 1px 0 0 40px;
}
.actions a {
  display: flex;
  align-items: center;
  font-size: 22.5px;
  line-height: 30px;
  letter-spacing: -0.55px;
  color: #1a73e8;
}
.actions .view { letter-spacing: -0.33px; }
.edit svg { width: 17px; height: 17px; margin: 1px 9px 0 0; }
.delete svg { width: 22px; height: 23px; margin: 0 10px 0 0; }
.view svg { width: 24px; height: 20px; margin: 0 10px 0 0; }

/* Edge sidebar */
.sidebar {
  display: flex;
  flex-direction: column;
  align-items: center;
  width: 54px;
  padding-left: 1px;
}
.apps { display: flex; flex-direction: column; gap: 28.1px; margin-top: 18px; }
.apps svg { width: 22px; height: 22px; }
.apps .wide { width: 24px; height: 24px; margin: -1px; }
.rule { width: 35px; height: 1px; margin-top: 28px; background: #c9c9c9; }
.add { width: 16px; height: 16px; margin-top: 31px; }
.rule.bottom { margin-top: auto; }
.gear { width: 22px; height: 22px; margin: 17px 0 16px; }

/* Windows taskbar */
.taskbar {
  display: flex;
  align-items: center;
  height: 59px;
  border-top: 1px solid #a9bac4;
  background: #d9edf6;
}
.weather { position: relative; width: 32px; height: 58px; }
.weather svg { width: 20px; height: 28px; margin-top: 15px; }
.weather span {
  position: absolute;
  top: 8px;
  left: 2px;
  width: 30px;
  height: 20px;
  border-radius: 10px;
  background: rgba(250, 252, 253, .82);
  font-size: 14px;
  line-height: 20px;
  letter-spacing: -0.5px;
  text-align: center;
  color: #111;
}
.start { width: 29px; height: 29px; margin: 1px 0 0 200px; }
.search {
  display: flex;
  align-items: center;
  width: 274px;
  height: 40px;
  margin-left: 17px;
  padding: 0 4px 0 14px;
  border: 1px solid #c5dbe5;
  border-bottom-color: #a9c0cb;
  border-radius: 20px;
  background: #f4fafd;
}
.glass { width: 19px; height: 19px; }
.search span { margin-left: 12px; font-size: 17px; letter-spacing: -0.3px; color: #5b6165; }
.zen { width: 58px; height: 32px; margin-left: auto; }
.pinned { display: flex; margin-left: 2px; }
.app {
  display: flex;
  flex-direction: column;
  align-items: center;
  width: 55.1px;
  height: 58px;
  padding-top: 13px;
}
.app svg { width: 30px; height: 30px; overflow: visible; }
.app.run::after, .app.active::after {
  content: "";
  width: 8px;
  height: 4px;
  margin-top: 6px;
  border-radius: 2px;
  background: #7f8b90;
}
.app.active {
  background: linear-gradient(#edf5fc, #edf5fc) center 5px / 48px 48px no-repeat;
}
.app.active::after { width: 20px; background: #0078d4; }
.tray {
  display: flex;
  align-items: center;
  margin: -1px 23px 0 auto;
  font-size: 15px;
  line-height: 20px;
  color: #1b1b1b;
}
.up { width: 14px; height: 8px; }
.lang, .clock { display: flex; flex-direction: column; letter-spacing: -0.26px; }
.lang { align-items: center; width: 30px; margin-left: 26px; letter-spacing: -0.5px; }
.wifi { width: 20px; height: 16px; margin-left: 22px; }
.volume { width: 20px; height: 16px; margin-left: 10px; }
.battery { width: 20px; height: 13px; margin-left: 10px; }
.clock { align-items: flex-end; width: 80px; margin: -1px 0 0 10px; }
.bell { width: 17px; height: 19px; margin-left: 11px; }
.preview { position: relative; width: 30px; height: 28px; margin: 2px 0 0 22px; }
.preview svg { width: 30px; height: 28px; }
.preview span {
  position: absolute;
  right: 0;
  bottom: 0;
  width: 23px;
  height: 9px;
  border-radius: 2px;
  background: #fdc50c;
  font-size: 8px;
  font-weight: 800;
  line-height: 9px;
  text-align: center;
  color: #222;
}
```
